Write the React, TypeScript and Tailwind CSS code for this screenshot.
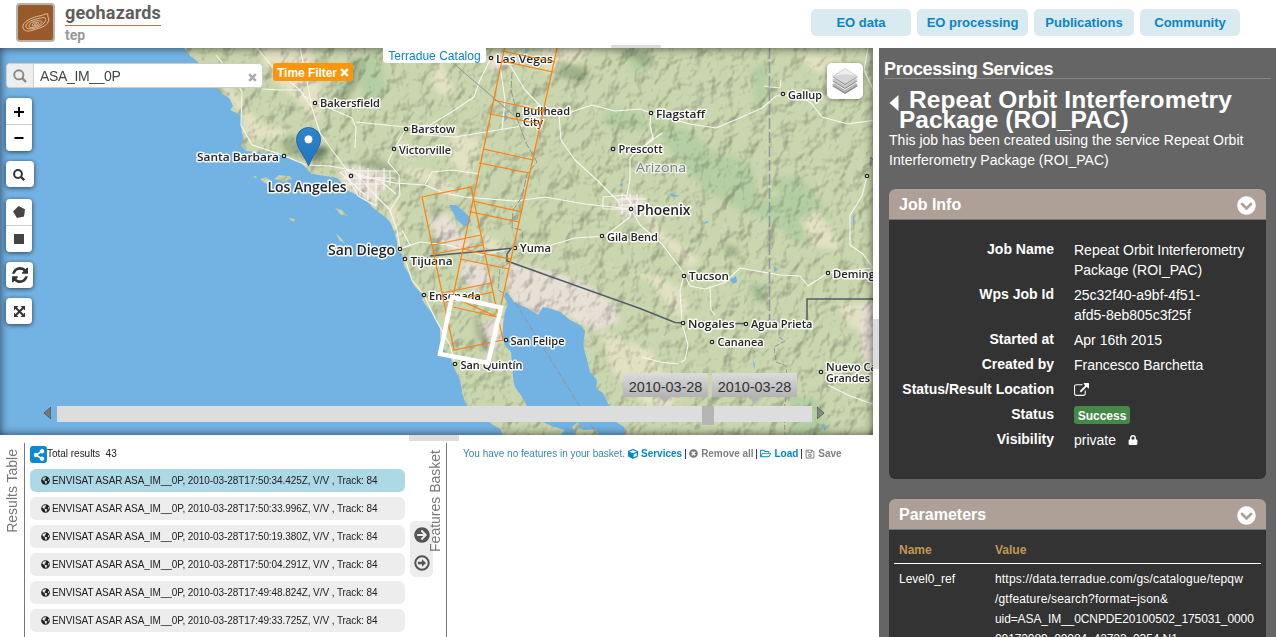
import React from "react";
import {
  FaArrowCircleRight, FaChevronCircleDown, FaCube, FaGlobeAmericas, FaLock,
  FaRegFolderOpen, FaRegSave, FaShareAlt, FaTimesCircle,
} from "react-icons/fa";

type Label = { t: string; x: number; y: number; w?: number; dot?: [number, number]; big?: boolean; soft?: boolean };

const labels: Label[] = [
  { t: "Bakersfield", x: 320, y: 107, w: 60, dot: [315, 103] },
  { t: "Las Vegas", x: 496, y: 63, w: 57, dot: [491, 58] },
  { t: "Barstow", x: 411, y: 133, w: 44, dot: [406, 129] },
  { t: "Victorville", x: 399, y: 153.5, w: 52, dot: [394, 149] },
  { t: "Santa Barbara", x: 197, y: 161, w: 82, dot: [284, 156] },
  { t: "Los Angeles", x: 267.5, y: 192, w: 79, dot: [351, 176], big: true },
  { t: "Bullhead", x: 523, y: 114.5, w: 47, dot: [518, 115] },
  { t: "City", x: 523, y: 125.5, w: 20 },
  { t: "Flagstaff", x: 656, y: 117.5, w: 49, dot: [651, 113] },
  { t: "Gallup", x: 788, y: 98.5, w: 34, dot: [783, 94] },
  { t: "Prescott", x: 618.5, y: 153, w: 44, dot: [613, 149] },
  { t: "Arizona", x: 636, y: 172, w: 50, soft: true },
  { t: "Phoenix", x: 636.5, y: 214.5, w: 54, dot: [631, 209], big: true },
  { t: "Gila Bend", x: 607, y: 241, w: 51, dot: [602, 236] },
  { t: "Yuma", x: 520, y: 252, w: 31, dot: [515, 248] },
  { t: "San Diego", x: 328, y: 254.5, w: 67, dot: [400, 249], big: true },
  { t: "Tijuana", x: 410.5, y: 265, w: 42, dot: [405, 259] },
  { t: "Ensenada", x: 429, y: 299.5, w: 52, dot: [424, 295] },
  { t: "San Felipe", x: 510.5, y: 344.5, w: 54, dot: [506, 340] },
  { t: "San Quintín", x: 460.5, y: 369, w: 62, dot: [455, 364] },
  { t: "Tucson", x: 689, y: 280, w: 40, dot: [684, 276] },
  { t: "Deming", x: 833, y: 277.5, w: 42, dot: [828, 273] },
  { t: "Nogales", x: 688, y: 327.5, w: 46.5, dot: [683, 323] },
  { t: "Agua Prieta", x: 751, y: 328, w: 61.5, dot: [746, 324] },
  { t: "Cananea", x: 717.5, y: 346, w: 46, dot: [712, 342] },
  { t: "Nuevo Casas", x: 826, y: 370.5, w: 68, dot: [821, 372] },
  { t: "Grandes", x: 826, y: 381.5, w: 44 },
];

const LAND =
  "M184 48L190 56 197 61 205 71 216 85 221 93 229 98 233 106 230 110 240 115 242 120 241 127 243 138 241 146 246 151 262 153 275 153 284 155 292 160 300 162 306 168 311 174 325 176 337 178 342 183 344 188 352 193 360 196 366 200 373 208 385 217 390 222 394 231 397 242 397 251 402 254 404 266 411 278 413 285 422 294 422 300 427 307 434 316 440 328 440 338 444 350 450 356 453 366 460 380 462 393 466 405 474 415 490 423 500 429 503 436 560 436 565 430 552 426 543 422 535 412 527 406 523 398 515 387 513 377 512 360 511 352 505 345 503 337 503 325 505 312 508 304 504 296 507 292 515 303 525 307 538 315 543 307 552 309 560 312 570 320 580 325 585 331 583 345 587 360 590 372 597 380 596 389 603 393 610 408 613 420 624 427 625 436 880 436 880 44Z M577 436L572 427 578 422 583 430 596 429 599 436Z M260 179L266 177 271 181 266 184Z M274 179L279 175 290 176 292 179 284 182Z M251 177L256 176 257 178Z M335 208L342 210 348 216 341 215Z M335 232L340 237 345 243 340 241Z M289 218L295 219 297 222 291 221Z";

const deserts = [
  "M435 216L448 213 460 233 474 245 458 253 438 240 430 222Z",
  "M462 262L480 262 492 276 490 282 474 290 462 278Z",
  "M510 262L535 268 580 280 612 302 620 322 596 330 580 324 562 312 540 314 515 303 506 290Z",
  "M488 320L503 318 503 338 488 360 479 340 480 325Z",
  "M340 170L350 166 390 172 386 182 376 206 355 192 343 184Z",
  "M616 200L625 194 642 194 646 212 624 218 616 208Z",
  "M862 306L878 300 878 365 864 360 860 336Z",
  "M486 58L505 52 508 66 494 72Z",
];
const sands = [
  "M262 48L310 48 320 80 322 105 318 122 300 103 276 82 262 60Z",
  "M205 62L225 80 240 100 262 125 290 130 280 138 244 140 244 120 226 92Z",
  "M395 166L430 170 460 190 458 200 420 180Z",
  "M430 80L440 60 455 90 440 96Z",
  "M452 130L480 140 470 180 450 160Z",
  "M470 225L485 235 505 244 506 252 484 250Z",
  "M600 260L625 272 660 275 680 290 690 310 676 316 650 280 612 268Z",
  "M640 190L660 230 700 260 690 268 650 230Z",
  "M838 305L870 302 866 332 850 326Z",
  "M400 140L420 152 412 160 396 152Z",
  "M384 196L400 210 404 238 396 240Z",
  "M540 48L600 48 580 60 545 75Z",
  "M800 55L850 60 840 78 812 70Z",
  "M800 220L820 210 840 250 812 246Z",
  "M600 330L650 350 680 400 660 420 612 370Z",
];
const woods = [
  "M620 52L640 50 650 68 636 74Z",
  "M648 118L690 130 710 150 750 162 760 200 800 190 820 225 798 244 770 220 740 210 705 190 670 150Z",
  "M752 70L768 60 768 100 756 106Z",
  "M610 108L640 112 650 130 620 130 600 122Z",
  "M772 180L800 175 830 215 825 240 800 232Z",
  "M356 60L380 50 386 90 366 110Z",
  "M790 394L820 400 830 434 790 434Z",
  "M750 280L765 284 765 304 752 300Z",
];
const shades = [
  "M280 142L292 134 304 146 330 150 326 160 300 158 286 152Z",
  "M330 100L345 84 350 60 362 58 358 84 344 104 334 110Z",
  "M358 160L380 160 398 168 390 174 364 168Z",
  "M432 232L440 248 436 262 430 244Z",
  "M474 312L486 334 492 356 486 352 476 334Z",
  "M726 244L738 248 738 258 726 254Z",
  "M754 286L764 290 764 302 756 298Z",
  "M560 60L590 70 584 84 556 76Z",
  "M610 50L650 52 656 66 640 64 630 56Z",
  "M442 206L436 222 430 210Z",
];
const roads = [
  "M257 48L275 70 300 90 312 108 320 133 332 150 347 170 365 178 380 178",
  "M300 48L306 75 312 108M216 55L232 75 242 92 241 125 252 145 280 154 306 165 330 166 352 170",
  "M262 89L280 90 300 90 304 96 316 102 352 118 356 128 355 148M356 122L405 127 430 125 450 113 474 97 480 80 491 58 510 65 525 90 542 108 565 114 592 105 615 111 640 109 651 113",
  "M651 113L690 124 716 128 742 117 762 108 776 96 800 95 812 104 822 117 848 124 876 120",
  "M406 129L394 149 388 162 399 175 400 195 390 210 397 230 400 249",
  "M347 170L370 178 395 183 425 185 444 193 464 197 515 201 545 197 585 204 631 209 640 225 662 244 683 272 690 286 705 289 724 283 740 268 780 275 800 276 808 286 828 273 873 268",
  "M651 113L650 125 653 138 645 145 630 158 630 180 626 200M662 133L646 145M559 115L561 140 575 160 597 180 620 203",
  "M400 249L420 242 448 245 482 255 515 248 545 247 575 238 605 236M605 236L630 217 633 205 625 195 603 197 603 209 631 209",
  "M684 276L680 290 682 323 688 345 685 360 681 362M710 288L711 310 715 315M642 357L660 362 678 364",
  "M828 385L850 396 873 404M868 48L864 70 878 100M867 176L862 196 850 215 850 245 863 254 873 268",
  "M345 172L358 196 376 206M352 168L372 192 390 210M343 178L395 178M345 171L396 171M348 184L385 184M340 172L365 195M360 166V196M368 168V200M376 170V206M384 168V190M390 171V186M382 182L396 194M410 134L455 137 516 127 540 120",
  "M425 185L432 172 452 170 480 174M400 249L410 245 402 230M455 364L450 345 436 320 424 295 412 280 405 259M500 65L505 100 502 130",
  "M764 86L780 88 781 80M618 205L640 205M618 199L646 199M622 194V215M630 194V215M637 194V212",
];
const lakes = [
  "M449 205L456 205 470 217 471 222 465 227 457 220Z",
  "M505 112L508 118 504 122Z",
  "M730 280L736 276 737 282 733 284Z",
  "M669 193L680 196 672 197Z", "M702 224L708 221 708 223Z",
  "M774 266L777 269 774 272Z", "M853 216L855 221 853 225Z", "M823 423L827 428 824 431Z",
  "M753 360L755 364 754 370Z", "M620 184L623 183 621 187Z", "M525 48L527 51 525 54Z", "M340 87L346 86 343 88Z",
];
const tracks = [
  "M504.5 48L453 297 497 317 501 305 557 48", "M502 51L555 62M501 61L553 72M493 100L543 111M490 114L540 124",
  "M483 149L533 160M479 163L529 173M473 201L522 212M471 212L519 222M462 249L511 259M460 259L509 269M453 307L497 317M453 297L501 306",
  "M422 197L471 187 503 340 454 350Z", "M433 245L481 235M434 254L483 245M443 293L491 283M446 302L493 292",
];

function MapDrawing() {
  return (
    <svg className="block h-full w-full" viewBox="0 48 873 387" preserveAspectRatio="none">
      <defs>
        <clipPath id="land"><path d={LAND} /></clipPath>
        <filter id="soft" x="-20%" y="-20%" width="140%" height="140%"><feGaussianBlur stdDeviation="2.4" /></filter>
        <filter id="relief" x="0" y="0" width="100%" height="100%" colorInterpolationFilters="sRGB">
          <feTurbulence type="fractalNoise" baseFrequency="0.07 0.055" numOctaves="3" seed="12" result="n" />
          <feDiffuseLighting in="n" surfaceScale="5.5" diffuseConstant="1.38" lightingColor="#fff">
            <feDistantLight azimuth="225" elevation="48" />
          </feDiffuseLighting>
        </filter>
        <linearGradient id="pin" x1="0" y1="0" x2="0" y2="1">
          <stop offset="0" stopColor="#2e86cb" /><stop offset="1" stopColor="#2373be" />
        </linearGradient>
      </defs>
      <rect y="48" width="873" height="387" fill="#73b3e4" />
      <g clipPath="url(#land)">
        <path d={LAND} fill="#cad6ae" />
        <g filter="url(#soft)">
          {woods.map((d) => <path key={d} d={d} fill="#b2cca0" opacity=".85" />)}
          {sands.map((d) => <path key={d} d={d} fill="#e2e1c2" />)}
          {deserts.map((d) => <path key={d} d={d} fill="#e8dfd5" />)}
          {shades.map((d) => <path key={d} d={d} fill="#8fa37e" opacity=".7" />)}
        </g>
        <rect x="180" y="48" width="693" height="387" filter="url(#relief)" className="opacity-25 mix-blend-multiply" />
      </g>
      {lakes.map((d) => <path key={d} d={d} fill="#73b3e4" />)}
      <g fill="none" stroke="#f8f7f0" strokeWidth="1.100" strokeLinejoin="round">
        {roads.map((d) => <path key={d} d={d} />)}
      </g>
      <g fill="none" stroke="#8c969b" strokeWidth="1">
        <path d="M512 72L511 90 515 105 517 118 526 143 537 162 527 174 522 197 513 210 512 228 522 230 523 240 518 248" strokeDasharray="7 2" />
        <path d="M453 63L517 118" />
        <path d="M769.500 48V320" strokeWidth="1.500" strokeDasharray="11 3" />
        <path d="M515 302L580 407 597 435" strokeDasharray="7 2" />
        <path d="M511 262L500 268 498 290 507 295M779 330L779 337 785 341 774 347 776 362 786 366 788 385 784 410 785 435" strokeDasharray="5 2" />
      </g>
      <path d="M430 256L511 248.500 507 254 507 261 640 308.500 675 322.500 683 323M735 323.500H745M807 320V299H873" fill="none" stroke="#515d68" strokeWidth="1.500" />
      <g className="font-['Open_Sans','Noto_Sans',sans-serif]">
        {labels.map((l) => (
          <g key={l.t + l.x}>
            {l.dot && <circle cx={l.dot[0]} cy={l.dot[1]} r="1.700" fill="#fff" stroke="#222" strokeWidth="1.200" />}
            <text
              x={l.x} y={l.y} textLength={l.w} lengthAdjust="spacingAndGlyphs"
              fontSize={l.big ? 13.5 : l.soft ? 13.5 : 11.3} fontWeight={l.soft ? 400 : 600}
              fill={l.soft ? "#7d838b" : "#262626"} stroke="#fff" strokeOpacity={l.soft ? 0.6 : 0.9}
              strokeWidth={3} strokeLinejoin="round" paintOrder="stroke"
            >{l.t}</text>
          </g>
        ))}
        <text x="869" y="166" fontSize="13" fill="#7d838b">N</text>
        <circle cx="867" cy="176" r="1.700" fill="#fff" stroke="#222" strokeWidth="1.200" />
      </g>
      <g fill="none" stroke="#ff7f0e" strokeWidth="1.200">
        {tracks.map((d) => <path key={d} d={d} />)}
      </g>
      <path d="M452 297L501 307.500 488 363 440 354Z" fill="none" stroke="#fff" strokeWidth="4.500" />
      <path d="M309 165L330 149 320 145Z" fill="#000" opacity=".35" filter="url(#soft)" />
      <path d="M308.500 166C306 158 296.500 148 296.500 139.500A12 12 0 0 1 320.500 139.500C320.500 148 311 158 308.500 166Z" fill="url(#pin)" stroke="#2467a5" strokeWidth="1" />
      <circle cx="308.500" cy="139.300" r="4.400" fill="#fff" stroke="#2467a5" strokeWidth=".7" />
    </svg>
  );
}

const RefreshIcon = () => (
  <svg className="h-4 w-4" viewBox="0 0 1536 1536" fill="currentColor">
    <path d="M1511 928q0 5-1 7-64 268-268 434.500T764 1536q-146 0-282.500-55T238 1324l-129 129q-19 19-45 19t-45-19-19-45V960q0-26 19-45t45-19h448q26 0 45 19t19 45-19 45l-137 137q71 66 161 102t187 36q134 0 250-65t186-179q11-17 53-117 8-23 30-23h192q13 0 22.500 9.500t9.500 22.500zm25-800v448q0 26-19 45t-45 19h-448q-26 0-45-19t-19-45 19-45l138-138Q969 256 768 256q-134 0-250 65T332 500q-11 17-53 117-8 23-30 23H50q-13 0-22.500-9.500T18 608v-7q65-268 270-434.500T768 0q146 0 284 55.500T1297 212l130-129q19-19 45-19t45 19 19 45z" />
  </svg>
);
const ExternalIcon = () => (
  <svg className="mt-[3px] h-[13px] w-[15px]" viewBox="0 0 1792 1536" fill="currentColor">
    <path d="M1408 928v320q0 119-84.500 203.500T1120 1536H288q-119 0-203.500-84.500T0 1248V416q0-119 84.500-203.500T288 128h704q14 0 23 9t9 23v64q0 14-9 23t-23 9H288q-66 0-113 47t-47 113v832q0 66 47 113t113 47h832q66 0 113-47t47-113V928q0-14 9-23t23-9h64q14 0 23 9t9 23zm384-864v512q0 26-19 45t-45 19-45-19l-176-176-652 652q-10 10-23 10t-23-10L695 983q-10-10-10-23t10-23l652-652-176-176q-19-19-19-45t19-45 45-19h512q26 0 45 19t19 45z" />
  </svg>
);
const ExpandIcon = () => (
  <svg className="h-[11px] w-[11px]" viewBox="0 0 11 11" fill="#333" stroke="#333">
    <path d="M0 0H4.500L0 4.500ZM11 0H6.500L11 4.500ZM0 11H4.500L0 6.500ZM11 11H6.500L11 6.500Z" stroke="none" />
    <path d="M2 2L9 9M9 2L2 9" strokeWidth="2" />
  </svg>
);
const Cross = ({ className }: { className: string }) => (
  <svg className={"h-[9px] w-[9px] " + className} viewBox="0 0 9 9"><path d="M1.200 1.200L7.800 7.800M7.800 1.200L1.200 7.800" stroke="currentColor" strokeWidth="2.600" /></svg>
);
const LayersIcon = () => (
  <svg className="h-7 w-7" viewBox="0 0 28 28">
    <path d="M1 19L14 12 27 19 14 27Z" fill="#8c8c8c" />
    <path d="M1 17.500L14 10 27 17.500 14 25.500Z" fill="#b5b5b5" />
    <path d="M1 14.500L14 7.500 27 14.500 14 22.500Z" fill="#8a8a8a" stroke="#fff" strokeWidth=".8" />
    <path d="M1 13L14 6 27 13 14 21Z" fill="#c4c4c4" />
    <path d="M1 10L14 2 27 10 14 18.500Z" fill="#8a8a8a" stroke="#fff" strokeWidth=".5" />
    <path d="M1 9L14 1 27 9 14 17Z" fill="#d6d6d6" />
    <path d="M5 8.500L14 2 24 8.500Q14 6 5 8.500Z" fill="#efefef" />
  </svg>
);
const CircleArrow = () => (
  <svg className="h-4 w-4" viewBox="0 0 16 16" fill="#555">
    <circle cx="8" cy="8" r="6.700" fill="none" stroke="#555" strokeWidth="2" />
    <path d="M4 6.800H8V4.200L12 8 8 11.800V9.200H4Z" />
  </svg>
);

const tool = "flex items-center justify-center bg-white text-[#333]";
const box = "overflow-hidden rounded shadow-[0_1px_5px_rgba(0,0,0,.65)]";

function DateFlag({ className }: { className: string }) {
  return (
    <div className={"absolute top-[325px] h-6 w-[85px] bg-gradient-to-b from-[#dcdcdc] to-[#b3b3b3] text-center text-[14.400px] leading-[28px] text-[#333] " + className}>
      2010-03-28
      <svg className="absolute left-9 top-6 h-[6px] w-3" viewBox="0 0 12 6"><path d="M0 0H12L6 6Z" fill="#b3b3b3" /></svg>
    </div>
  );
}

function MapPanel() {
  return (
    <section className="relative h-[387px] w-[873px] shrink-0 overflow-hidden">
      <MapDrawing />
      <div className="absolute inset-0 shadow-[inset_0_0_10px_rgba(0,0,0,.65)]" />
      <div className="absolute left-[383px] top-0 flex h-[15px] w-[103px] items-center justify-center rounded-b bg-white text-[12px] text-[#0a84c9]"><span className="tracking-[.02px]">Terradue Catalog</span></div>
      <div className="absolute left-1.5 top-[15px] flex h-[25px] w-[257px] overflow-hidden rounded border border-[#ccc] bg-white">
        <div className="flex w-[27px] items-center justify-center border-r border-[#ccc] bg-[#eee] text-[#888]">
          <svg className="h-[14px] w-[14px]" viewBox="0 0 14 14" fill="none" stroke="#888" strokeWidth="1.900"><circle cx="5.800" cy="5.800" r="4.600" /><path d="M9.200 9.200L13 13" strokeWidth="2.400" /></svg>
        </div>
        <div className="flex-1 pl-1.5 text-[14px] leading-[24px] tracking-[-.35px] text-[#444]">ASA_IM__0P</div>
        <Cross className="mr-[5px] mt-[9px] text-[#aaa]" />
      </div>
      <div className="absolute left-[273px] top-[15px] flex h-[18px] w-20 items-center justify-center gap-[3px] rounded-[3px] bg-[#fb950c] text-[12px] font-bold leading-[20px] text-white"><span className="pt-px tracking-[-.05px]">Time Filter</span><Cross className="text-white" /></div>
      <div className="absolute left-1.5 top-[50px] flex flex-col items-start">
        <div className={"w-[26px] " + box}>
          <div className={tool + " h-[27px] border-b border-[#ccc]"}><svg className="mt-0.5 h-2.5 w-2.5" viewBox="0 0 10 10"><path d="M5 0V10M0 5H10" stroke="#000" strokeWidth="2" /></svg></div>
          <div className={tool + " h-[26px]"}><svg className="h-2.5 w-2.5" viewBox="0 0 10 10"><path d="M.5 5H9.500" stroke="#000" strokeWidth="2" /></svg></div>
        </div>
        <div className={tool + " mt-2.5 h-[26px] w-7 pr-0.5 " + box}>
          <svg className="mt-0.5 h-3 w-3" viewBox="0 0 12 12" fill="none" stroke="#333" strokeWidth="2"><circle cx="5" cy="5" r="3.900" /><path d="M8 8L11.200 11.200" strokeWidth="2.300" /></svg>
        </div>
        <div className={"mt-3 w-[26px] " + box}>
          <div className={tool + " h-[27px] border-b border-[#ccc]"}><svg className="h-3 w-3" viewBox="0 0 12 12"><path d="M5.500 0L12 3.200 11 10.500 4 12 0 5.500Z" fill="#444" /></svg></div>
          <div className={tool + " h-[26px]"}><div className="h-2.5 w-2.5 bg-[#444]" /></div>
        </div>
        <div className={tool + " mt-2.5 h-[26px] w-[27px] " + box}><RefreshIcon /></div>
        <div className={tool + " mt-2.5 h-[26px] w-[26px] " + box}><ExpandIcon /></div>
      </div>
      <div className="absolute left-[827px] top-[15px] flex h-9 w-9 items-center justify-center rounded-[5px] bg-white shadow-[0_1px_5px_rgba(0,0,0,.4)]"><LayersIcon /></div>
      <DateFlag className="left-[623px]" />
      <DateFlag className="left-[712px]" />
      <div className="absolute left-11 top-[358px] flex h-[19px] w-[781px] items-start">
        <svg className="mr-[6px] mt-px h-3 w-[7px]" viewBox="0 0 7 12"><path d="M7 0V12L0 6Z" fill="#777" stroke="#444" strokeWidth=".7" /></svg>
        <div className="flex h-4 w-[755px] bg-[#ddd] pl-[645px]"><div className="h-[19px] w-3 bg-[#b5b5b5]" /></div>
        <svg className="ml-[5px] mt-px h-3 w-[7px]" viewBox="0 0 7 12"><path d="M0 0V12L7 6Z" fill="#888" stroke="#444" strokeWidth=".7" /></svg>
      </div>
    </section>
  );
}

const times = ["17:50:34.425Z", "17:50:33.996Z", "17:50:19.380Z", "17:50:04.291Z", "17:49:48.824Z", "17:49:33.725Z"];
const vertical = "rotate-180 whitespace-nowrap text-[14px] leading-[16px] text-[#777] [writing-mode:vertical-rl]";

function BottomPanel() {
  return (
    <section className="relative flex h-[202px] w-[873px] overflow-hidden bg-white pt-2">
      <div className="absolute left-[409px] top-0 h-[6px] w-[50px] bg-[#ddd]" />
      <div className="flex w-[25px] items-start border-r border-[#777] pl-1 pt-[6px]"><span className={vertical}>Results Table</span></div>
      <div className="w-[380px] pl-[5px] pt-[3px]">
        <div className="flex h-[17px] text-[10px] text-[#222]">
          <span className="flex h-[17px] w-[17px] items-center justify-center rounded-[3px] bg-[#0a88d0] text-white"><FaShareAlt size={12} /></span>
          <span className="whitespace-pre leading-[16px] tracking-[-.02px]">Total results  43</span>
        </div>
        <div className="mt-[6px] flex flex-col gap-[5px]">
          {times.map((t, i) => (
            <div key={t} className={"flex h-[23px] items-center gap-[2px] rounded-md pl-[11px] text-[10px] text-[#222] " + (i ? "bg-[#ededed]" : "bg-[#add8e6]")}>
              <FaGlobeAmericas size={9} /><span className="whitespace-nowrap tracking-[-.08px]">ENVISAT ASAR ASA_IM__0P, 2010-03-28T{t}, V/V , Track: 84</span>
            </div>
          ))}
        </div>
      </div>
      <div className="relative w-[42px] border-r border-[#777]">
        <div className="ml-[5px] mt-[78px] flex h-14 w-[23px] flex-col items-center justify-between rounded-[5px] bg-[#ededed] py-[6px] text-[#555]">
          <FaArrowCircleRight size={16} /><CircleArrow />
        </div>
        <span className={"absolute left-[22px] top-[7px] " + vertical}>Features Basket</span>
      </div>
      <div className="flex h-[21px] items-center whitespace-nowrap pl-4 text-[10px] text-[#3a87ad]">
        <span>You have no features in your basket.</span>
        <FaCube className="ml-[3px] mr-[3px] text-[#0088cc]" size={10} /><b className="text-[#0088cc]">Services</b>
        <i className="mx-[3px] h-2.5 w-px bg-[#4b2a6b]" />
        <FaTimesCircle className="mr-[3px] text-[#777]" size={9} /><b className="tracking-[-.05px] text-[#808080]">Remove all</b>
        <i className="mx-[3px] h-2.5 w-px bg-[#4b2a6b]" />
        <FaRegFolderOpen className="mr-[3px] text-[#0088cc]" size={11} /><b className="text-[#0088cc]">Load</b>
        <i className="mx-[3px] h-2.5 w-px bg-[#4b2a6b]" />
        <FaRegSave className="mr-[3px] text-[#808080]" size={10} /><b className="text-[#808080]">Save</b>
      </div>
    </section>
  );
}

function CardHead({ title }: { title: string }) {
  return (
    <div className="flex h-[31px] items-center justify-between rounded-t-md border-b border-[#777] bg-[#ae9f97] pl-2.5 pr-2.5 text-[16px] font-bold text-white">
      <span className="pt-[2px]">{title}</span><FaChevronCircleDown className="mt-0.5" size={19} />
    </div>
  );
}

const info: [string, React.ReactNode][] = [
  ["Job Name", <>Repeat Orbit Interferometry<br />Package (ROI_PAC)</>],
  ["Wps Job Id", <>25c32f40-a9bf-4f51-<br />afd5-8eb805c3f25f</>],
  ["Started at", "Apr 16th 2015"],
  ["Created by", "Francesco Barchetta"],
  ["Status/Result Location", <ExternalIcon />],
  ["Status", <span className="mt-[1px] block h-[18px] w-14 rounded-[3px] bg-[#468847] text-center text-[12px] font-bold leading-[20px]">Success</span>],
  ["Visibility", <span className="flex items-center gap-3">private <FaLock size={10} /></span>],
];

function Sidebar() {
  return (
    <aside className="h-[589px] w-[397px] shrink-0 overflow-hidden bg-[#656565] text-white">
      <h1 className="ml-[5px] mr-[5px] mt-2.5 h-[21px] border-b border-[#858585] text-[18px] font-bold leading-[22px] tracking-[-.37px]">Processing Services</h1>
      <div className="flex h-[50px] pl-2.5 pt-[11px]">
        <svg className="mt-[5px] h-[17px] w-[10px]" viewBox="0 0 10 17"><path d="M9.500 0V16L.5 8Z" fill="#fff" /></svg>
        <h2 className="whitespace-nowrap text-[24.500px] font-bold leading-[20px]"><span className="pl-2.5 tracking-[.11px]">Repeat Orbit Interferometry</span><br />Package (ROI_PAC)</h2>
      </div>
      <p className="mt-px whitespace-nowrap pl-2.5 text-[14px] leading-[20px] tracking-[.02px]">This job has been created using the service Repeat Orbit<br />Interferometry Package (ROI_PAC)</p>
      <div className="ml-2.5 mt-[19px] h-[290px] w-[377px] rounded-md bg-[#333]">
        <CardHead title="Job Info" />
        <dl className="flex flex-col gap-[5px] pt-5 text-[14px] leading-[20px]">
          {info.map(([k, v]) => (
            <div key={k} className="flex"><dt className="-mt-px w-[165px] whitespace-nowrap text-right font-bold">{k}</dt><dd className="ml-5 min-h-5 whitespace-nowrap">{v}</dd></div>
          ))}
        </dl>
      </div>
      <div className="ml-2.5 mt-5 h-[300px] w-[377px] rounded-t-md bg-[#333] text-[12px]">
        <CardHead title="Parameters" />
        <div className="mx-[5px] flex h-[34px] border-b border-white pl-[5px] pt-[10px] font-bold leading-[20px] text-[#c09853]"><span className="w-24">Name</span><span>Value</span></div>
        <div className="flex pl-2.5 pt-[5px] leading-[20px]"><span className="w-24">Level0_ref</span><span className="tracking-[-.1px]"><span className="tracking-[.18px]">https://data.terradue.com/gs/catalogue/tepqw<br />/gtfeature/search?format=json&amp;</span><br />uid=ASA_IM__0CNPDE20100502_175031_0000<br />00172089_00084_42723_0354.N1</span></div>
      </div>
    </aside>
  );
}

const nav: [string, string][] = [["EO data", "w-[100px]"], ["EO processing", "w-[111px]"], ["Publications", "w-[100px]"], ["Community", "w-[100px]"]];

export default function App() {
  return (
    <div className="h-[637px] w-[1276px] overflow-hidden bg-white font-['Liberation_Sans',Arial,sans-serif]">
      <header className="relative flex h-12 justify-between pl-4 pr-9">
        <div className="flex">
          <div className="mt-[3px] flex h-[39px] w-[39px] items-center justify-center rounded-[4px] border-2 border-[#b5b2b0] bg-[#995a29]">
            <svg className="h-[30px] w-[30px]" viewBox="0 0 30 30" fill="none" stroke="#e3c3a6" strokeWidth=".9">
              <path d="M2 20C0 14 12 9 18 8 21 8 24 5 27 6 26 9 29 11 27 14 26 18 19 20 12 22 7 24 3 23 2 20Z" />
              <path d="M5 19C4 14 13 11 20 10 25 8 26 12 23 15 19 20 6 23 5 19ZM8 18C8 14 15 12 20 13 23 14 18 18 13 19 10 20 8 20 8 18ZM11 17C12 14 17 14 18 15 18 17 11 19 11 17ZM13 16.500L16 15.500" />
            </svg>
          </div>
          <div className="ml-[10px] font-[Roboto,sans-serif] font-bold">
            <div className="h-[26px] w-24 whitespace-nowrap border-b border-[#b27850] text-[18px] leading-[25px] tracking-[.15px] text-[#5e5e5e]">geohazards</div>
            <div className="text-[14px] leading-[18px] text-[#999]">tep</div>
          </div>
        </div>
        <nav className="mt-[9px] flex gap-[6px]">
          {nav.map(([n, w]) => <a key={n} className={"h-[27px] rounded-[5px] bg-[#daeaf1] text-center text-[13px] font-bold leading-[27px] text-[#0a84c9] " + w}>{n}</a>)}
        </nav>
        <div className="absolute left-[611px] top-[45px] h-[3px] w-[50px] bg-[#ddd]" />
      </header>
      <main className="flex h-[589px]">
        <div className="w-[873px] shrink-0"><MapPanel /><BottomPanel /></div>
        <div className="w-[6px] shrink-0 pt-[271px]"><div className="h-[50px] bg-[#ddd]" /></div>
        <Sidebar />
      </main>
    </div>
  );
}
